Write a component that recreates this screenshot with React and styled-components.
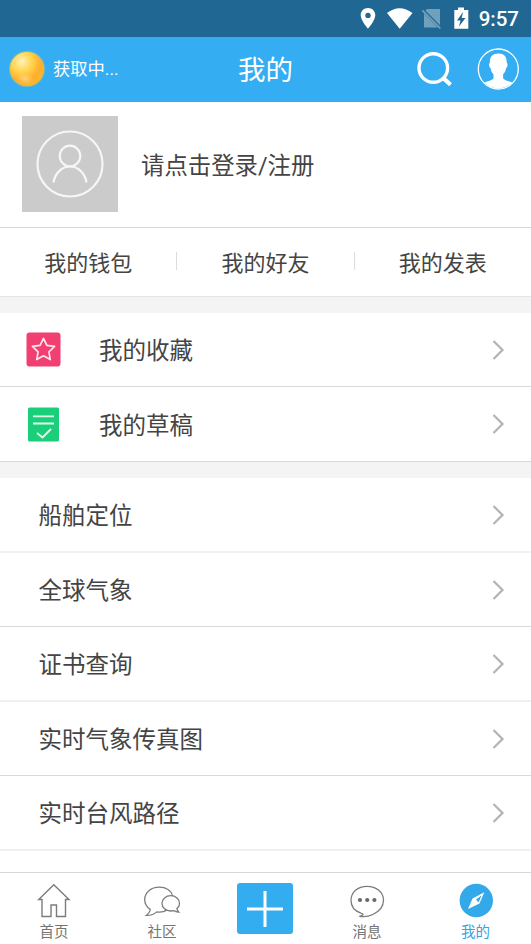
import React from "react";
import styled, { createGlobalStyle } from "styled-components";

const GlobalStyle = createGlobalStyle`
  * {
    box-sizing: border-box;
  }
  body {
    margin: 0;
    background-color: #fff;
    color: #444;
    font-family: Roboto, "Noto Sans CJK SC", sans-serif;
  }
  svg {
    display: block;
    flex: none;
  }
`;
const Screen = styled.div`
  display: flex;
  flex-direction: column;
  width: 100%;
  height: 944px;
  overflow: hidden;
`;
const StatusBar = styled.div`
  display: flex;
  justify-content: flex-end;
  align-items: center;
  flex: none;
  height: 37px;
  padding-right: 12px;
  background-color: #206893;
  color: #fff;
`;
const Clock = styled.span`
  margin-left: 9px;
  padding-top: 2px;
  font-size: 20.5px;
  font-weight: 500;
  line-height: 35px;
`;
const Header = styled.header`
  display: grid;
  grid-template-columns: 1fr auto 1fr;
  align-items: center;
  flex: none;
  height: 65px;
  padding: 0 12px 1px 8px;
  background-color: #34adf3;
  color: #fff;
`;
const Weather = styled.div`
  display: flex;
  align-items: center;
  gap: 7px;
  font-size: 17.3px;
  line-height: 28px;
`;
const WeatherText = styled.span`
  padding-bottom: 1px;
`;
const Title = styled.h1`
  margin: 0 0 0 4px;
  padding-top: 3px;
  font-size: 27.5px;
  font-weight: 400;
  line-height: 40px;
`;
const Actions = styled.div`
  display: flex;
  justify-content: flex-end;
  align-items: center;
  gap: 23px;
`;
const Profile = styled.div`
  display: flex;
  align-items: center;
  flex: none;
  height: 126px;
  padding: 0 0 1px 22px;
  border-bottom: 1px solid #d8d8d8;
`;
const Avatar = styled.div`
  display: flex;
  justify-content: center;
  align-items: center;
  width: 96px;
  height: 96px;
  background-color: #cbcbcb;
`;
const LoginText = styled.span`
  margin-left: 23px;
  font-size: 23.4px;
`;
const Tabs = styled.div`
  display: flex;
  align-items: center;
  flex: none;
  height: 69px;
  border-bottom: 1px solid #e4e4e4;
`;
const Tab = styled.div`
  flex: 1;
  padding-top: 3px;
  text-align: center;
  font-size: 22px;
  line-height: 34px;
`;
const Divider = styled.div`
  width: 1px;
  height: 18px;
  margin-bottom: 2px;
  background-color: #dcdcdc;
`;
const List = styled.div`
  flex: none;
  border-top: ${(props) => props.$gap}px solid #f4f4f4;
`;
const Row = styled.div`
  display: flex;
  align-items: center;
  height: ${(props) => props.$height}px;
  padding: 0 26px 0 ${(props) => (props.$icon ? 26 : 38.5)}px;
  border-bottom: ${(props) =>
    props.$soft ? "2px solid #f0f0f0" : "1px solid #dadada"};
`;
const RowIcon = styled.div`
  width: 73px;
`;
const RowTitle = styled.span`
  flex: 1;
  padding-top: 3px;
  font-size: 23.5px;
  line-height: 36px;
`;
const NavBar = styled.nav`
  display: flex;
  flex: none;
  height: 72px;
  margin-top: auto;
  border-top: 1px solid #d8d8d8;
  background-color: #fff;
`;
const NavItem = styled.div`
  display: flex;
  flex-direction: column;
  align-items: center;
  width: ${(props) => props.$width}px;
  padding-top: 9px;
  color: ${(props) => (props.$active ? "#34a5e3" : "#747474")};
  font-size: 14.5px;
`;
const NavLabel = styled.span`
  margin-top: 4px;
  line-height: 22px;
`;
const AddButton = styled.div`
  display: flex;
  justify-content: center;
  align-items: center;
  width: 56px;
  height: 51px;
  margin-top: 1px;
  border-radius: 3px;
  background-color: #34adf0;
`;

const StatusIcons = () => (
  <svg width="110" height="37" viewBox="360 0 110 37">
    <path
      fill="#fff"
      fillRule="evenodd"
      d="M368 8c-4.300 0-7.300 3.200-7.300 7.300 0 5.200 7.300 13.400 7.300 13.400s7.300-8.200 7.300-13.400c0-4.100-3-7.300-7.300-7.300zm0 4.700a2.700 2.700 0 1 1 0 5.400 2.700 2.700 0 0 1 0-5.400z"
    />
    <path fill="#fff" d="M387 13q12.500-9.500 25.500 0L399.700 28.700z" />
    <path fill="#6fa0bc" d="M427 9h13v16.200L425.500 10.500zM424 13.500L437.800 27.500H424z" />
    <path stroke="#6fa0bc" strokeWidth="1.800" d="M422.300 10.300l18 18" />
    <path
      fill="#fff"
      fillRule="evenodd"
      d="M454.300 10h3.700V7.500h6V10h4.300v18.700h-14zM463 12l-6 8.500h3.500L459 26.500l6.500-8.500h-3.800z"
    />
  </svg>
);

const SunIcon = () => (
  <svg width="38" height="38" viewBox="0 0 38 38">
    <defs>
      <radialGradient id="sun" cx="0.35" cy="0.28" r="0.75">
        <stop offset="0" stopColor="#fff3b8" />
        <stop offset="0.400" stopColor="#ffd44f" />
        <stop offset="0.750" stopColor="#ffad2c" />
        <stop offset="1" stopColor="#f8b92b" />
      </radialGradient>
      <radialGradient id="glow" cx="0.5" cy="0.5" r="0.5">
        <stop offset="0" stopColor="#ffe9b0" stopOpacity="0.600" />
        <stop offset="1" stopColor="#ffdb80" stopOpacity="0" />
      </radialGradient>
    </defs>
    <circle cx="19" cy="19" r="18" fill="#b5c47c" opacity="0.600" />
    <circle cx="19" cy="19" r="17" fill="url(#sun)" />
    <ellipse cx="17" cy="29" rx="9" ry="6" fill="url(#glow)" />
  </svg>
);

const SearchIcon = () => (
  <svg width="38" height="38" viewBox="416 51 38 38" fill="none" stroke="#fff">
    <circle cx="433.300" cy="69" r="14.300" strokeWidth="3.400" />
    <path d="M443.500 79.200l7 6.500" strokeWidth="4.200" />
  </svg>
);

const UserIcon = () => (
  <svg width="42" height="42" viewBox="0 0 42 42">
    <defs>
      <clipPath id="user">
        <circle cx="21.300" cy="21" r="19.500" />
      </clipPath>
    </defs>
    <circle cx="21.300" cy="21" r="20" fill="none" stroke="#fff" strokeWidth="1.300" />
    <path
      clipPath="url(#user)"
      fill="#fff"
      d="M21.300 5.500c6 0 8.700 3.500 8.500 9.500 1.300.5.700 4.500-.8 5.300-.5 3-1.500 4.700-2.900 6v4c1.200 3 10.200 3 12.200 6.700V42H4.300v-5c2-3.700 11-3.700 12.200-6.700v-4c-1.400-1.300-2.400-3-2.900-6-1.500-.8-2.100-4.800-.8-5.300-.2-6 2.500-9.500 8.500-9.500z"
    />
  </svg>
);

const AvatarIcon = () => (
  <svg width="68" height="68" viewBox="0 0 68 68" fill="none" stroke="#f6f6f6" strokeWidth="2.200">
    <circle cx="34" cy="34" r="32.500" />
    <circle cx="34" cy="26" r="10.300" />
    <path d="M17.500 52.500c1.500-9 8-16 16.500-16s15 7 16.500 16" />
  </svg>
);

const StarIcon = () => (
  <svg width="35" height="35" viewBox="0 0 35 35">
    <rect x="0.500" y="0.500" width="34" height="34" rx="3" fill="#f23f72" />
    <path
      fill="none"
      stroke="#ffe6ed"
      strokeWidth="1.700"
      strokeLinejoin="round"
      d="M17.500 6.300l3.400 7.100 7.700 1-5.700 5.400 1.400 7.800-6.800-3.800-6.800 3.800 1.400-7.800-5.700-5.400 7.700-1z"
    />
  </svg>
);

const DraftIcon = () => (
  <svg width="35" height="35" viewBox="0 0 35 35">
    <rect x="2" y="0.500" width="31" height="34" rx="1.500" fill="#1bce79" />
    <path fill="none" stroke="#dcffec" strokeWidth="1.800" d="M7 9.300h21M7 16.500h21M11 26l5.500 4.500 8.500-8.500" />
  </svg>
);

const Arrow = () => (
  <svg width="14" height="22" viewBox="0 0 14 22" fill="none" stroke="#b3b3b3" strokeWidth="2.200">
    <path d="M2.500 2l9 9-9 9" />
  </svg>
);

const HomeIcon = () => (
  <svg width="36" height="36" viewBox="36 881 36 36" fill="none" stroke="#7c7c7c" strokeWidth="1.400">
    <path d="M42 898.500h-3.300L53.800 883.700 69 898.500h-3.500v17h-9v-11.500h-5.500v11.500h-9z" />
  </svg>
);

const ChatIcon = () => (
  <svg width="38" height="36" viewBox="143 881 38 36" fill="none" stroke="#7c7c7c" strokeWidth="1.300">
    <path d="M172.500 894.700c-1.200-5-6.500-8.500-13.200-8.500-8.300 0-14.600 5.200-14.600 12.300 0 4.200 2 7.500 5.500 9.900.2 2.500-1.800 4.200-4 6 4.500.2 8-1 10.600-3.500 3.700.5 7.200 0 10-1.800" />
    <path d="M170.800 894.700c-5 0-8.800 3.300-8.800 7.700s3.800 7.600 8.800 7.600l3-.4c1.300 1 3 1.600 5 1.500-1-1-1.700-2.100-1.900-3.500 1.700-1.300 2.600-3 2.600-5.200 0-4.400-3.800-7.700-8.700-7.700z" />
  </svg>
);

const PlusIcon = () => (
  <svg width="36" height="36" viewBox="0 0 36 36" stroke="#fff" strokeWidth="3">
    <path d="M18 0v36M0 18h36" />
  </svg>
);

const MessageIcon = () => (
  <svg width="36" height="36" viewBox="349 881 36 36" fill="none" stroke="#7c7c7c" strokeWidth="1.300">
    <path d="M367 885.300c-9.300 0-16 6-16 14 0 6 4 10.800 9.800 12.800 3.500 1 2.700 2.500-1.500 3.200 5 .8 9.500.2 13.500-1.800 6.500-3 10.700-7.700 10.700-14.200 0-8-7-14-16.500-14z" />
    <g fill="#686868" stroke="none">
      <circle cx="360" cy="899" r="2.100" />
      <circle cx="367.200" cy="899" r="2.100" />
      <circle cx="374.400" cy="899" r="2.100" />
    </g>
  </svg>
);

const CompassIcon = () => (
  <svg width="36" height="36" viewBox="458 882 36 36">
    <circle cx="476.300" cy="900.500" r="16.700" fill="#34a9e9" />
    <path
      fill="#fff"
      fillRule="evenodd"
      d="M484.300 892.300l-4.800 11.200-11.500 5.500 4.500-10.500zM481.500 895.500l-5.500 4 2.500 3z"
    />
  </svg>
);

const mineList = [
  { title: "我的收藏", icon: <StarIcon />, height: 74 },
  { title: "我的草稿", icon: <DraftIcon />, height: 75 },
];
const toolList = [
  { title: "船舶定位", height: 75, soft: true },
  { title: "全球气象", height: 74 },
  { title: "证书查询", height: 75, soft: true },
  { title: "实时气象传真图", height: 74 },
  { title: "实时台风路径", height: 75, soft: true },
];

const ListRow = ({ item }) => (
  <Row $icon={item.icon} $height={item.height} $soft={item.soft}>
    {item.icon && <RowIcon>{item.icon}</RowIcon>}
    <RowTitle>{item.title}</RowTitle>
    <Arrow />
  </Row>
);

const App = () => {
  return (
    <>
      <GlobalStyle />
      <Screen>
        <StatusBar>
          <StatusIcons />
          <Clock>9:57</Clock>
        </StatusBar>
        <Header>
          <Weather>
            <SunIcon />
            <WeatherText>获取中...</WeatherText>
          </Weather>
          <Title>我的</Title>
          <Actions>
            <SearchIcon />
            <UserIcon />
          </Actions>
        </Header>
        <Profile>
          <Avatar>
            <AvatarIcon />
          </Avatar>
          <LoginText>请点击登录/注册</LoginText>
        </Profile>
        <Tabs>
          <Tab>我的钱包</Tab>
          <Divider />
          <Tab>我的好友</Tab>
          <Divider />
          <Tab>我的发表</Tab>
        </Tabs>
        <List $gap={16}>
          {mineList.map((item) => (
            <ListRow key={item.title} item={item} />
          ))}
        </List>
        <List $gap={16}>
          {toolList.map((item) => (
            <ListRow key={item.title} item={item} />
          ))}
        </List>
        <NavBar>
          <NavItem $width={108}>
            <HomeIcon />
            <NavLabel>首页</NavLabel>
          </NavItem>
          <NavItem $width={108}>
            <ChatIcon />
            <NavLabel>社区</NavLabel>
          </NavItem>
          <NavItem $width={98}>
            <AddButton>
              <PlusIcon />
            </AddButton>
          </NavItem>
          <NavItem $width={106}>
            <MessageIcon />
            <NavLabel>消息</NavLabel>
          </NavItem>
          <NavItem $width={111} $active>
            <CompassIcon />
            <NavLabel>我的</NavLabel>
          </NavItem>
        </NavBar>
      </Screen>
    </>
  );
};

export default App;
